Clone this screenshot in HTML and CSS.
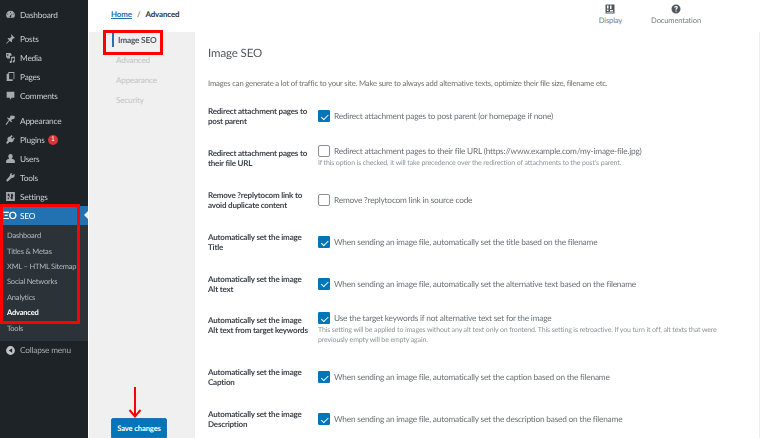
FILE: index.html
```html
<!DOCTYPE html>
<html lang="en">
<head>
<meta charset="utf-8">
<title>Image SEO</title>
<link rel="stylesheet" href="styles.css">
</head>
<body>
<div class="app">
  <aside class="sidebar">
    <nav class="menu">
      <a class="item first"><svg class="ico" viewBox="0 0 20 20"><path d="M10 3a8 8 0 0 0-8 8c0 2 .7 3.800 2 5h12c1.300-1.200 2-3 2-5a8 8 0 0 0-8-8zm0 2a1 1 0 1 1 0 2 1 1 0 0 1 0-2zM5 10a1 1 0 1 1 0-2 1 1 0 0 1 0 2zm10-2a1 1 0 1 1 0 2 1 1 0 0 1 0-2zm-4 4.500a1.500 1.500 0 1 1-2-.100L13 8z"/></svg>Dashboard</a>
      <a class="item sep"><svg class="ico" viewBox="0 0 20 20"><path d="M11 2l7 7-1.500 1-1-.500-3 3 .500 3-1.500 1.500-3-3-5 5-1.500.500.500-1.500 5-5-3-3L6 9l3 .500 3-3-.500-1z"/></svg>Posts</a>
      <a class="item"><svg class="ico" viewBox="0 0 20 20"><path d="M2 2h8l2 2v3H9v5H4V10H2zm3 2a1.500 1.500 0 1 0 0 3 1.500 1.500 0 0 0 0-3zm6 5l7-1v9a2 2 0 1 1-1.500-2V11l-4 .6V18a2 2 0 1 1-1.500-2z"/></svg>Media</a>
      <a class="item"><svg class="ico" viewBox="0 0 20 20"><path d="M6 2h11v13h-3v3H3V5h3zm1.500 1.500V15H15.500V3.500z"/></svg>Pages</a>
      <a class="item"><svg class="ico" viewBox="0 0 20 20"><path d="M3 3h14v11h-5l-3 4v-4H3z"/></svg>Comments</a>
      <a class="item sep2"><svg class="ico" viewBox="0 0 20 20"><path d="M18 2l-1 5-5 1-1 2 2 2-2 1-3-3-5 8-2-1 6-8-3-3 1-2 2 2 2-1 1-4z"/></svg>Appearance</a>
      <a class="item"><svg class="ico" viewBox="0 0 20 20"><path d="M12 2l2 2-3 3 2 2 3-3 2 2-3 3 1 1-2 2c-2 1.500-4 1-5.500 0L4 18l-2-2 3-4.500C4 10 4 8 5.500 6.500L7.500 4.500l1 1z"/></svg>Plugins <span class="badge">1</span></a>
      <a class="item"><svg class="ico" viewBox="0 0 20 20"><path d="M10 2a4 4 0 0 1 4 4c0 2-1 3.500-2 4.300 3 .5 6 2 6 4.200V18H2v-3.500c0-2.200 3-3.700 6-4.200C7 9.500 6 8 6 6a4 4 0 0 1 4-4z"/></svg>Users</a>
      <a class="item"><svg class="ico" viewBox="0 0 20 20"><path d="M17 3l-3 3-2-1 0-2 2-1c-3-.500-6 2-5 5l-7 8 2.500 2.500 8-7c3 1 5.500-2 5-5.500z"/></svg>Tools</a>
      <a class="item"><svg class="ico" viewBox="0 0 20 20"><path fill-rule="evenodd" d="M2 2h16v16H2zm3 3v4h2v1.500h2V9H8V5zm6 0v6h-1v2h1v2h3V9h1V7h-1V5zM5 12v3h2v-3z"/></svg>Settings</a>
      <a class="item current"><span class="seo-logo">ΞO</span>SEO</a>
      <div class="submenu">
        <a class="subitem">Dashboard</a>
        <a class="subitem">Titles &amp; Metas</a>
        <a class="subitem">XML – HTML Sitemap</a>
        <a class="subitem">Social Networks</a>
        <a class="subitem">Analytics</a>
        <a class="subitem active">Advanced</a>
        <a class="subitem">Tools</a>
      </div>
      <a class="item collapse"><svg class="ico" viewBox="0 0 20 20"><path fill-rule="evenodd" d="M10 2a8 8 0 1 1 0 16 8 8 0 0 1 0-16zm3 4l-6 4 6 4z"/></svg>Collapse menu</a>
    </nav>
  </aside>
  <div class="main">
    <header class="topbar">
      <div class="crumbs"><a class="home">Home</a><span class="slash">/</span><b>Advanced</b></div>
      <div class="tools">
        <div class="tool tool-display"><svg class="tool-ico" viewBox="0 0 20 20"><path fill-rule="evenodd" d="M1 1h18v18H1zm3 2v6h3V3zm6 0v7h3V3h-3zM4 11v3h3v-3zm6 1v3h6v-3zM3 16v1h14v-1z"/></svg><span>Display</span></div>
        <div class="tool tool-doc"><svg class="tool-ico" viewBox="0 0 20 20"><path fill-rule="evenodd" d="M10 1a9 9 0 1 1 0 18 9 9 0 0 1 0-18zM9 13v2.500h2.200V13zM10 4C8 4 6.500 5 6.300 7l2.200.300c.1-.8.600-1.300 1.400-1.300s1.300.4 1.300 1.100c0 1.300-2.300 1.500-2.300 4.400h2.200c0-2 2.500-2.200 2.500-4.600C13.600 5 12 4 10 4z"/></svg><span>Documentation</span></div>
      </div>
    </header>
    <div class="body">
      <nav class="tabs">
        <a class="tab on">Image SEO</a>
        <a class="tab">Advanced</a>
        <a class="tab">Appearance</a>
        <a class="tab">Security</a>
        <button class="save" type="button">Save changes</button>
      </nav>
      <section class="panel">
        <h1>Image SEO</h1>
        <p class="intro">Images can generate a lot of traffic to your site. Make sure to always add alternative texts, optimize their file size, filename etc.</p>
        <div class="row">
          <div class="label">Redirect attachment pages to post parent</div>
          <div class="control"><div class="line"><i class="box on"></i>Redirect attachment pages to post parent (or homepage if none)</div></div>
        </div>
        <div class="row">
          <div class="label">Redirect attachment pages to their file URL</div>
          <div class="control top"><div class="line"><i class="box"></i>Redirect attachment pages to their file URL (https://www.example.com/my-image-file.jpg)</div>
          <p class="desc">If this option is checked, it will take precedence over the redirection of attachments to the post's parent.</p></div>
        </div>
        <div class="row">
          <div class="label">Remove ?replytocom link to avoid duplicate content</div>
          <div class="control"><div class="line"><i class="box"></i>Remove ?replytocom link in source code</div></div>
        </div>
        <div class="row tight">
          <div class="label">Automatically set the image Title</div>
          <div class="control"><div class="line"><i class="box on"></i>When sending an image file, automatically set the title based on the filename</div></div>
        </div>
        <div class="row tight">
          <div class="label">Automatically set the image<br>Alt text</div>
          <div class="control"><div class="line"><i class="box on"></i>When sending an image file, automatically set the alternative text based on the filename</div></div>
        </div>
        <div class="row tall">
          <div class="label">Automatically set the image<br>Alt text from target keywords</div>
          <div class="control top"><div class="line"><i class="box on"></i>Use the target keywords if not alternative text set for the image</div>
          <p class="desc">This setting will be applied to images without any alt text only on frontend. This setting is retroactive. If you turn it off, alt texts that were previously empty will be empty again.</p></div>
        </div>
        <div class="row">
          <div class="label">Automatically set the image Caption</div>
          <div class="control"><div class="line"><i class="box on"></i>When sending an image file, automatically set the caption based on the filename</div></div>
        </div>
        <div class="row">
          <div class="label">Automatically set the image Description</div>
          <div class="control"><div class="line"><i class="box on"></i>When sending an image file, automatically set the description based on the filename</div></div>
        </div>
      </section>
    </div>
  </div>
  <div class="mark mark-tab"></div>
  <div class="mark mark-menu"></div>
  <svg class="arrow" viewBox="0 0 14 31"><path d="M7 0v29M1.500 23L7 29.500 12.500 23" fill="none" stroke="#f00" stroke-width="2"/></svg>
</div>
</body>
</html>
```

FILE: styles.css
```css
* { box-sizing: border-box; }
html, body { margin: 0; height: 100%; overflow: hidden; }
body { font-family: Lato, "Open Sans", sans-serif; font-size: 8px; color: #50575e; background: #fff; text-rendering: geometricPrecision; }
a { text-decoration: none; color: inherit; }

.app { position: relative; display: flex; width: 760px; height: 438px; overflow: hidden; }

.sidebar { flex: 0 0 88px; background: #1d2327; color: #c9cdd0; filter: blur(.25px); }
.menu { display: flex; flex-direction: column; padding-top: 5px; }
.item { display: flex; align-items: center; height: 19px; font-size: 8.300px; letter-spacing: -.2px; padding-left: 5px; }
.item.sep { margin-top: 5px; }
.item.sep2 { margin-top: 6px; }
.ico { width: 11px; height: 11px; margin-right: 4px; fill: #a7aaad; flex: none; }
.badge { display: inline-flex; width: 10px; height: 10px; margin-left: 3px; border-radius: 50%; background: #d63638; color: #fff; font-size: 6.500px; align-items: center; justify-content: center; }

.item.current { position: relative; background: #2271b1; color: #fff; padding-left: 3px; }
.item.current::after { content: ""; position: absolute; right: 0; top: 5px; border: 4.500px solid transparent; border-left: 0; border-right: 4.500px solid #f0f0f1; }
.seo-logo { width: 17px; font-size: 10px; font-weight: 700; line-height: 1; letter-spacing: -.5px; }
.submenu { display: flex; flex-direction: column; background: #2c3338; padding: 3px 0 5px; }
.subitem { display: flex; align-items: center; height: 15.400px; padding-left: 7px; font-size: 7.500px; letter-spacing: -.2px; color: #b4b9be; white-space: nowrap; }
.subitem.active { color: #fff; font-weight: 700; }
.collapse { color: #a7aaad; }
.collapse .ico { margin-right: 4px; fill: #c3c4c7; }

.main { flex: 1; display: flex; flex-direction: column; margin-left: 1px; min-width: 0; filter: blur(.25px); }
.topbar { flex: 0 0 32px; display: flex; justify-content: space-between; background: #fff; }
.crumbs { padding: 9px 0 0 22px; font-size: 7.900px; letter-spacing: -.1px; color: #2c3338; line-height: 11px; }
.home { color: #2271b1; font-weight: 700; text-decoration: underline; }
.slash { margin: 0 5px; }
.crumbs b { font-weight: 700; }
.tools { display: flex; padding-top: 4px; margin-right: 59px; gap: 29px; }
.tool { display: flex; flex-direction: column; align-items: center; color: #787c82; font-size: 7.600px; letter-spacing: -.15px; line-height: 11px; }
.tool-ico { width: 10px; height: 10px; margin-bottom: 1px; fill: #50575e; }

.body { flex: 1; display: flex; min-height: 0; }
.tabs { flex: 0 0 106px; position: relative; display: flex; flex-direction: column; background: #f0f0f0; padding: 0 0 0 27px; }
.tab { height: 20px; display: flex; align-items: center; color: #c3c4c7; font-size: 8.200px; letter-spacing: -.2px; }
.tab.on { position: relative; color: #50575e; font-weight: 700; font-size: 8.300px; padding-left: 2px; margin-top: -3px; height: 21px; }
.tab.on::before { content: ""; position: absolute; left: -4px; top: 2px; width: 1.500px; height: 16px; background: #2271b1; }
.save { position: absolute; left: 22px; bottom: 0; width: 56px; height: 20px; border: 1px solid #2271b1; border-radius: 2px 2px 0 0; background: #0075b8; color: #fff; font: 700 7.600px Lato, sans-serif; letter-spacing: -.12px; padding: 0; text-rendering: geometricPrecision; }

.panel { flex: 1; margin-right: 1px; padding: 14px 0 0 13px; background: #fff; min-width: 0; }
.app::after { content: ""; position: absolute; top: 32px; right: 0; bottom: 0; width: 1px; background: #f0f0f0; }
h1 { margin: 0; font-size: 11.500px; letter-spacing: -.1px; font-weight: 400; line-height: 16px; color: #50575e; }
.intro { margin: 16px 0 13px; font-size: 7.700px; letter-spacing: -.18px; line-height: 11px; color: #6e6e5f; white-space: nowrap; }

.row { display: flex; height: 42px; }
.row.tight { height: 41.500px; }
.row.tall { height: 52px; }
.label { flex: 0 0 110px; padding: 4px 3px 0 0; font-size: 8px; letter-spacing: -.19px; font-weight: 700; line-height: 10px; color: #3c434a; }
.control { padding-top: 8px; min-width: 0; }
.control.top { padding-top: 1px; }
.line { display: flex; align-items: center; height: 12px; white-space: nowrap; font-size: 8.300px; letter-spacing: -.2px; color: #6b6f74; }
.box { flex: none; width: 12px; height: 12px; margin-right: 4px; border: 1px solid #8c8f94; border-radius: 2px; background: #fff; position: relative; }
.box.on { border-color: #0075b8; border-radius: 1px; background: #0075b8; }
.box.on::after { content: ""; position: absolute; left: 3.500px; top: 1.500px; width: 3px; height: 5.500px; border: solid #fff; border-width: 0 1.600px 1.600px 0; transform: rotate(45deg); }
.desc { margin: 2px 0 0; width: 402px; font-size: 7px; letter-spacing: -.13px; line-height: 9.700px; color: #909498; }

.mark { position: absolute; border: 3px solid #f00; pointer-events: none; }
.mark-tab { left: 103px; top: 30px; width: 60px; height: 25px; }
.mark-menu { left: 0; top: 204px; width: 80px; height: 120px; }
.arrow { position: absolute; left: 128px; top: 387px; width: 14px; height: 31px; }
```
